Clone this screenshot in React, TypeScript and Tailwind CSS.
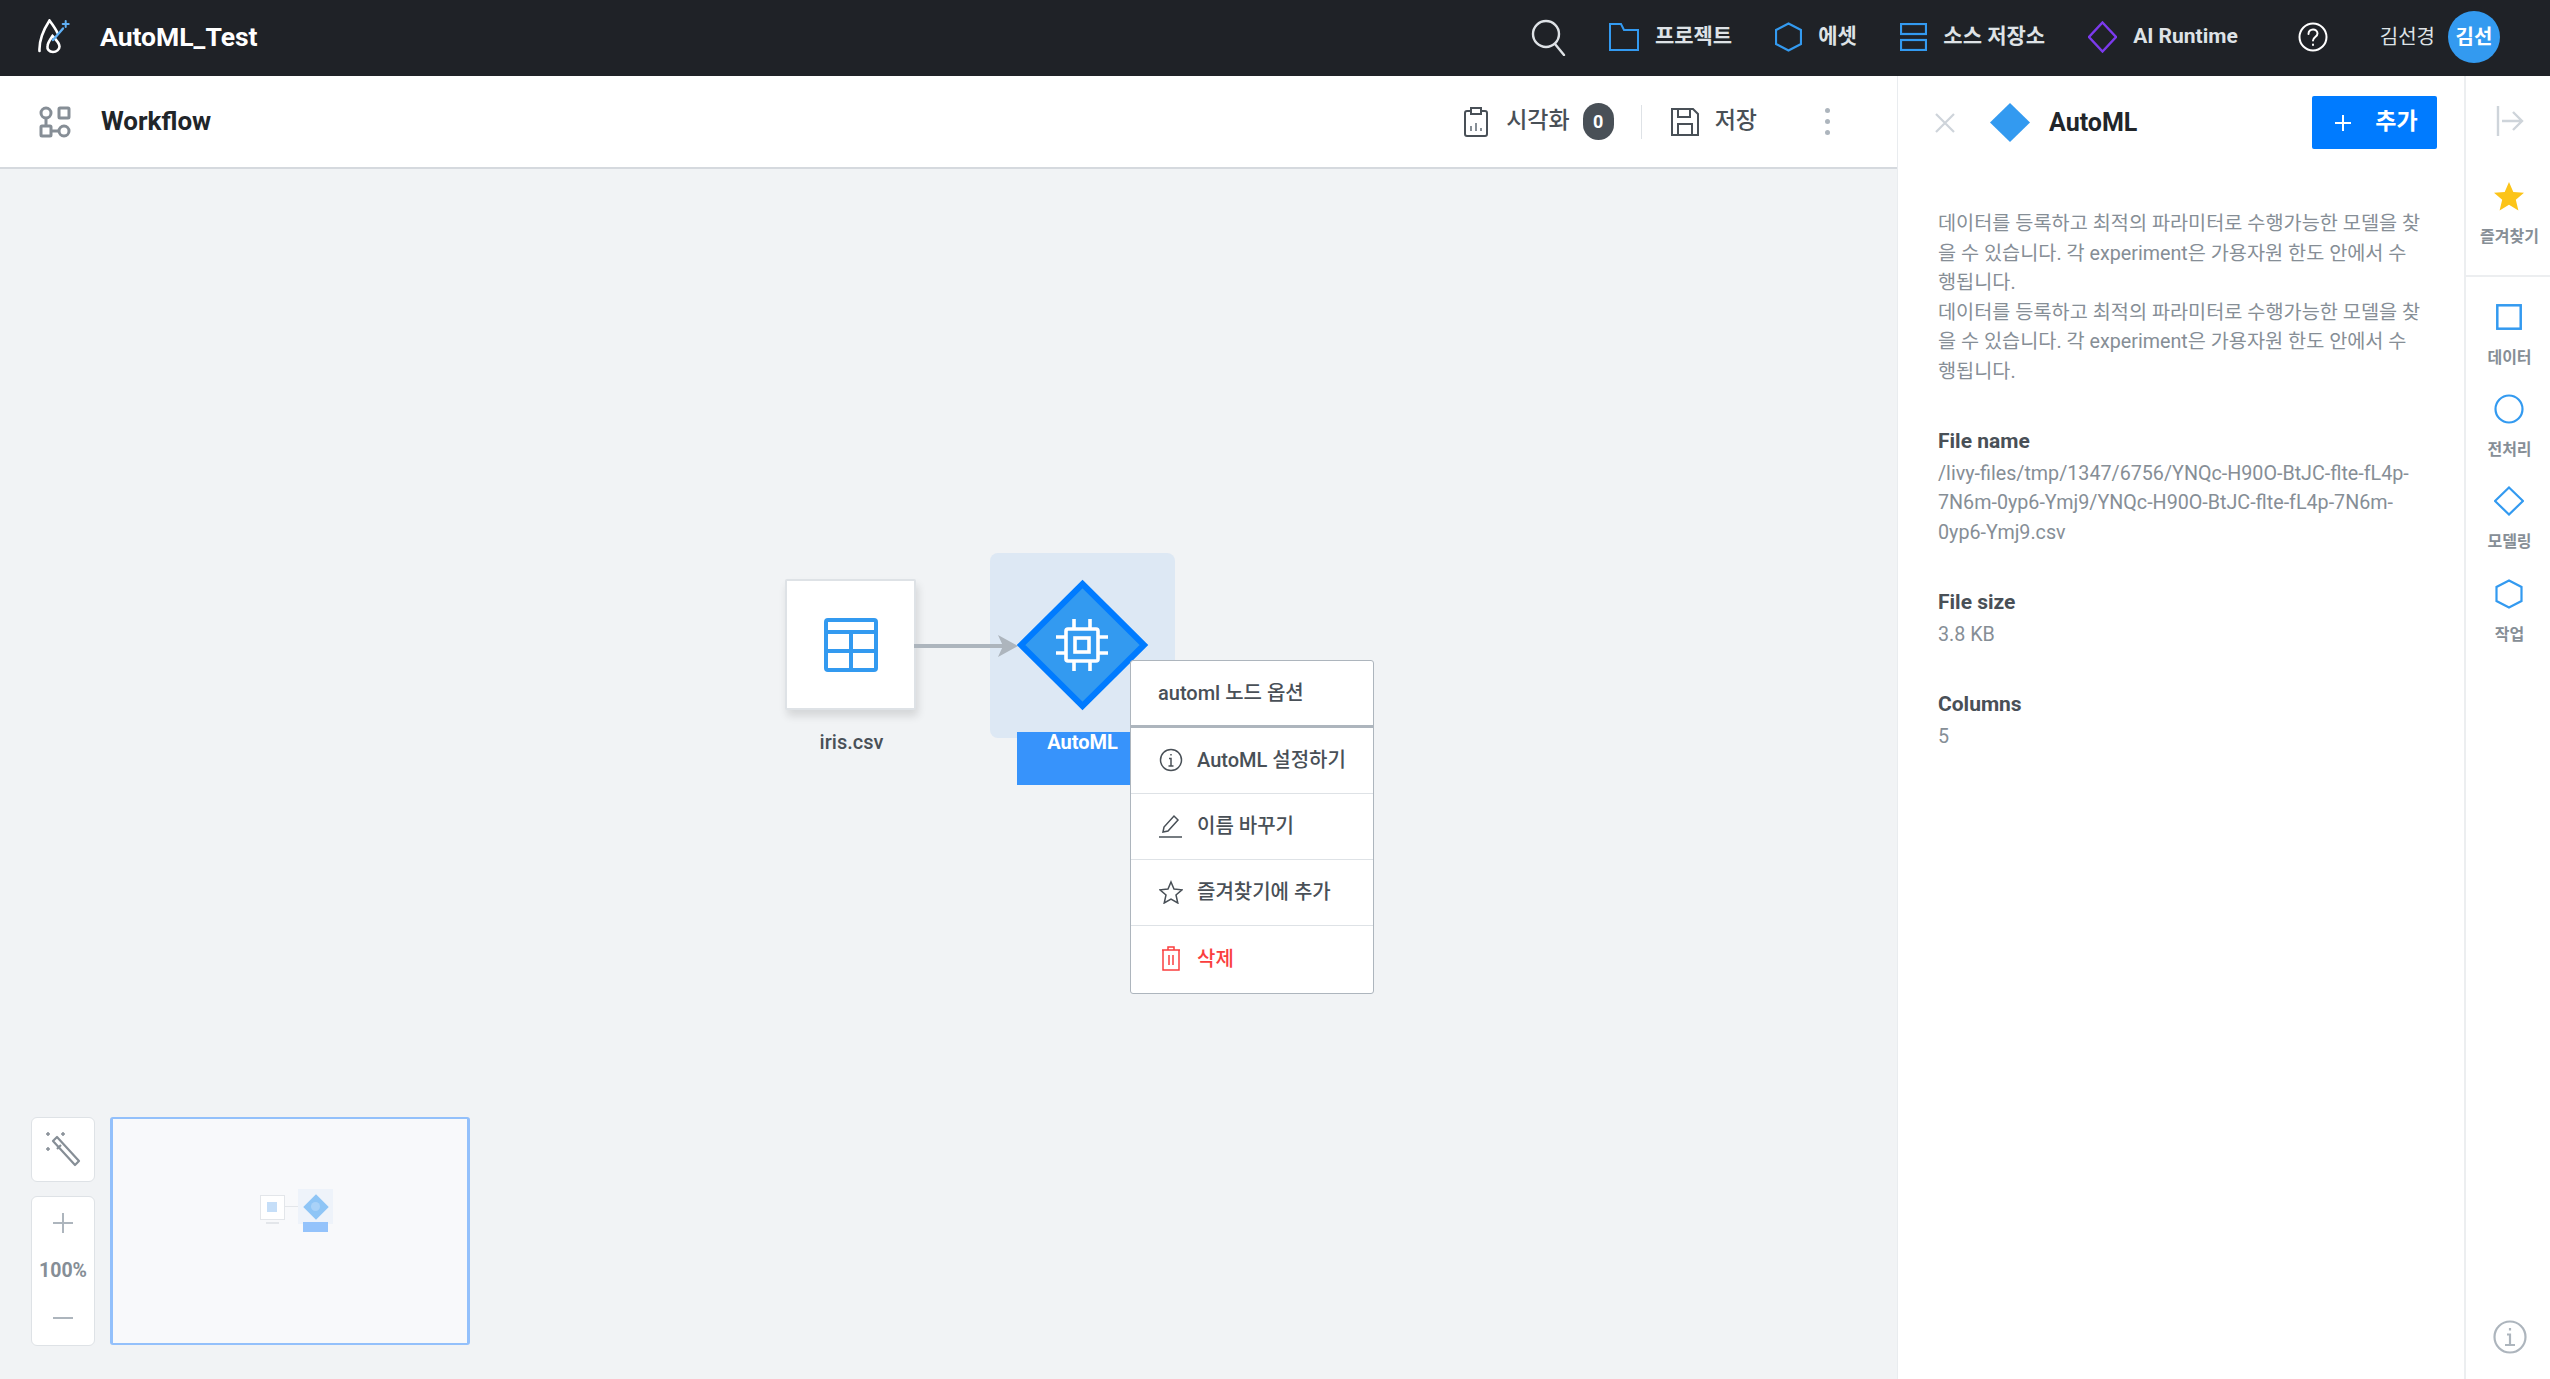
const FONT = "font-['Roboto','Noto_Sans_CJK_KR',sans-serif]";

function Logo() {
  return (
    <svg width="34" height="36" viewBox="0 0 34 36" fill="none" strokeLinecap="round" className="shrink-0">
      <path d="M1.500 32C1 22 6 10 11.500 1.500c3 4 6 8 8 12.500" stroke="#fff" strokeWidth="2.600" />
      <path d="M15 33c-4 0-6-3-5.500-6 .5-4 3-7 5-10 3 3 7 7 7 10.500 0 3-3 5.500-6.500 5.500z" stroke="#fff" strokeWidth="2.600" />
      <path d="M15 21 25 9.500" stroke="#5fb0f5" strokeWidth="2.400" />
      <path d="M27.700 2v6M24.700 5h6" stroke="#5fb0f5" strokeWidth="2" />
    </svg>
  );
}

function WorkflowIcon() {
  return (
    <svg width="32" height="32" viewBox="0 0 32 32" fill="none" stroke="#868e96" strokeWidth="3" className="shrink-0">
      <circle cx="7" cy="7" r="5" />
      <rect x="20" y="2" width="10" height="10" rx="1" />
      <rect x="2" y="20" width="10" height="10" rx="1" />
      <circle cx="25" cy="25" r="5" />
      <path d="M12 25h8M7 12v8" />
    </svg>
  );
}

function NavItem({ icon, label, className }: { icon: React.ReactNode; label: string; className: string }) {
  return (
    <div className={`flex items-center gap-[16px] ${className}`}>
      {icon}
      <span className="text-[21px] font-bold text-[#dee2e6]">{label}</span>
    </div>
  );
}

function ChipIcon() {
  return (
    <svg width="54" height="54" viewBox="0 0 54 54" fill="none" stroke="#fff" strokeWidth="3.600">
      <rect x="11" y="11" width="32" height="32" rx="2" />
      <rect x="20" y="20" width="14" height="14" />
      <path d="M19 1v10M35 1v10M19 43v10M35 43v10M1 19h10M1 35h10M43 19h10M43 35h10" />
    </svg>
  );
}

function TableIcon() {
  return (
    <svg width="54" height="54" viewBox="0 0 54 54" fill="none" stroke="#339af0" strokeWidth="4">
      <rect x="2" y="2" width="50" height="50" rx="2" />
      <path d="M2 14h50M2 33h50M27 14v38" />
    </svg>
  );
}

function MenuRow({ icon, label, danger, last }: { icon: React.ReactNode; label: string; danger?: boolean; last?: boolean }) {
  return (
    <div className={`flex items-center gap-[14px] pb-[2px] pl-[28px] ${last ? "h-[67px]" : "h-[66px] border-b border-[#dee2e6]"}`}>
      <span className="flex w-[24px] justify-center">{icon}</span>
      <span className={`text-[20px] font-medium ${danger ? "text-[#fa3e3e]" : "text-[#495057]"}`}>{label}</span>
    </div>
  );
}

function RailItem({ icon, label, className }: { icon: React.ReactNode; label: string; className: string }) {
  return (
    <div className={`flex flex-col items-center ${className}`}>
      <span className="flex h-[30px] items-center">{icon}</span>
      <span className="mt-[16px] text-[16px] leading-[20px] font-bold text-[#868e96]">{label}</span>
    </div>
  );
}

export default function App() {
  return (
    <div className={`flex h-screen w-full flex-col overflow-hidden bg-white ${FONT}`}>
      <header className="flex h-[76px] shrink-0 items-center bg-[#1f2227] pb-[3px] pl-[38px] pr-[50px]">
        <Logo />
        <h1 className="ml-[28px] text-[26.500px] font-bold text-white">AutoML_Test</h1>
        <div className="ml-auto flex items-center">
          <svg width="36" height="38" viewBox="0 0 36 38" fill="none" stroke="#dee2e6" strokeWidth="2.400" strokeLinecap="round">
            <circle cx="15" cy="16" r="13" />
            <path d="M24 26l9 11" />
          </svg>
          <NavItem
            className="ml-[42px]"
            label="프로젝트"
            icon={
              <svg width="30" height="28" viewBox="0 0 30 28" fill="none" stroke="#339af0" strokeWidth="2">
                <path d="M1 1h11l3 6h14v20H1z" />
              </svg>
            }
          />
          <NavItem
            className="ml-[43px]"
            label="에셋"
            icon={
              <svg width="27" height="30" viewBox="0 0 27 30" fill="none" stroke="#339af0" strokeWidth="2.200">
                <path d="M13.500 1.500 26 8v14l-12.500 6.500L1 22V8z" />
              </svg>
            }
          />
          <NavItem
            className="ml-[43.500px]"
            label="소스 저장소"
            icon={
              <svg width="27" height="28" viewBox="0 0 27 28" fill="none" stroke="#339af0" strokeWidth="2.200">
                <rect x="1" y="1" width="25" height="10" />
                <rect x="1" y="17" width="25" height="10" />
              </svg>
            }
          />
          <NavItem
            className="ml-[43px]"
            label="AI Runtime"
            icon={
              <svg width="29" height="32" viewBox="0 0 29 32" fill="none" stroke="#7c3aed" strokeWidth="2.400">
                <path d="M14.500 1.500 28 16 14.500 30.500 1 16z" />
              </svg>
            }
          />
          <svg className="ml-[60px]" width="30" height="30" viewBox="0 0 30 30" fill="none" stroke="#fff" strokeWidth="2" strokeLinecap="round">
            <circle cx="15" cy="15" r="13.500" />
            <path d="M10.500 12c0-6 9-6 9-.5 0 3.500-4.500 3.500-4.500 7" />
            <path d="M15 22.500v.5" />
          </svg>
          <span className="ml-[52px] text-[20px] text-[#dee2e6]">김선경</span>
          <div className="ml-[13px] flex h-[52px] w-[52px] items-center justify-center rounded-full bg-[#339af0] text-[20px] font-bold text-white">
            김선
          </div>
        </div>
      </header>

      <div className="flex min-h-0 flex-1">
        <main className="flex min-w-0 flex-1 flex-col">
          <div className="flex h-[93px] shrink-0 items-center border-b-2 border-[#d5d9de] pl-[39px] pr-[67px]">
            <WorkflowIcon />
            <h2 className="ml-[30px] text-[26px] font-bold text-[#212529]">Workflow</h2>
            <div className="ml-auto flex items-center">
              <svg width="24" height="30" viewBox="0 0 24 30" fill="none" stroke="#495057" strokeWidth="2">
                <rect x="1" y="4" width="22" height="25" rx="2" />
                <rect x="7" y="1" width="10" height="6" fill="#fff" />
                <path d="M7 24v-5M12 24v-8M17 24v-3" stroke="#868e96" />
              </svg>
              <span className="ml-[18px] text-[23px] font-medium text-[#495057]">시각화</span>
              <span className="ml-[13px] flex h-[37px] w-[31px] items-center justify-center rounded-full bg-[#495057] text-[18px] font-bold text-white">
                0
              </span>
              <div className="ml-[27px] h-[34px] w-px bg-[#dee2e6]" />
              <svg className="ml-[29px]" width="28" height="28" viewBox="0 0 28 28" fill="none" stroke="#495057" strokeWidth="2">
                <path d="M1 1h21l5 5v21H1z" />
                <path d="M7 1v8h12V1M7 27V16h14v11" />
              </svg>
              <span className="ml-[16px] text-[23px] font-medium text-[#495057]">저장</span>
              <div className="ml-[68px] flex flex-col gap-[6px]">
                <span className="h-[5px] w-[5px] rounded-full bg-[#adb5bd]" />
                <span className="h-[5px] w-[5px] rounded-full bg-[#adb5bd]" />
                <span className="h-[5px] w-[5px] rounded-full bg-[#adb5bd]" />
              </div>
            </div>
          </div>

          <div className="relative flex-1 bg-[#f1f3f5]">
            {/* nodes, positions are canvas coordinates */}
            <div className="absolute left-[785px] top-[410px] flex h-[131px] w-[131px] items-center justify-center rounded-[2px] border-2 border-[#dee2e6] bg-white shadow-[2px_6px_8px_rgba(0,0,0,0.12)]">
              <TableIcon />
            </div>
            <div className="absolute left-[786px] top-[562px] w-[131px] text-center text-[20px] leading-[22px] font-medium text-[#495057]">
              iris.csv
            </div>
            <div className="absolute left-[990px] top-[384px] h-[185px] w-[185px] rounded-[8px] bg-[#dde8f4]" />
            <div className="absolute left-[1017px] top-[563px] h-[53px] w-[131px] bg-[#3793fb] text-center text-[20px] leading-[20px] font-bold text-white">
              AutoML
            </div>
            <svg className="absolute left-[914px] top-[466px]" width="104" height="22" viewBox="0 0 104 22" fill="none">
              <path d="M0 11h90" stroke="#adb5bd" strokeWidth="4" />
              <path d="M84 0l20 11-20 11 5-11z" fill="#adb5bd" />
            </svg>
            <svg className="absolute left-[1016px] top-[410px]" width="133" height="132" viewBox="0 0 133 132">
              <path d="M66.500 5 128 66 66.500 127 5 66z" fill="#339af0" stroke="#007bff" strokeWidth="6" />
            </svg>
            <div className="absolute left-[1055px] top-[449px]">
              <ChipIcon />
            </div>

            {/* node context menu */}
            <div className="absolute left-[1130px] top-[491px] w-[244px] overflow-hidden rounded-[3px] border border-[#adb5bd] bg-white">
              <div className="flex h-[67px] items-center border-b-[3px] border-[#adb5bd] pl-[27px] text-[20px] font-medium text-[#495057]">
                automl 노드 옵션
              </div>
              <MenuRow
                label="AutoML 설정하기"
                icon={
                  <svg width="24" height="24" viewBox="0 0 24 24" fill="none" stroke="#495057" strokeWidth="1.500">
                    <circle cx="12" cy="12" r="10.500" />
                    <path d="M12 6v1.500M10 10.500h2V18M9.500 18h5" />
                  </svg>
                }
              />
              <MenuRow
                label="이름 바꾸기"
                icon={
                  <svg width="24" height="24" viewBox="0 0 24 24" fill="none" stroke="#495057" strokeWidth="1.500">
                    <path d="M4 18l1-5L15 2l4 4L9 17z" />
                    <path d="M0 23h23" />
                  </svg>
                }
              />
              <MenuRow
                label="즐겨찾기에 추가"
                icon={
                  <svg width="24" height="24" viewBox="0 0 24 24" fill="none" stroke="#495057" strokeWidth="1.500">
                    <path d="M12 2l3 7 8 .8-6 5.200 1.800 8L12 19l-6.800 4L7 15 1 9.800 9 9z" />
                  </svg>
                }
              />
              <MenuRow
                danger
                last
                label="삭제"
                icon={
                  <svg width="20" height="25" viewBox="0 0 20 25" fill="none" stroke="#fa3e3e" strokeWidth="1.500">
                    <path d="M1 4h18M7 4V1h6v3M2 4v20h16V4M8 9v10M12 9v10" />
                  </svg>
                }
              />
            </div>

            {/* zoom controls and minimap */}
            <div className="absolute bottom-[33px] left-[31px] flex gap-[15px]">
              <div className="flex flex-col gap-[14px]">
                <div className="flex h-[65px] w-[64px] items-center justify-center rounded-[6px] border border-[#dee2e6] bg-white">
                  <svg width="38" height="38" viewBox="0 0 38 38" fill="none" stroke="#868e96" strokeWidth="2.200">
                    <path d="M13 6l22 24-4 4L9 10z" strokeLinejoin="round" />
                    <path d="M17 14l-4 4" />
                    <path d="M4 1v4M2 3h4M19 1v4M17 3h4M4 16v4M2 18h4" strokeWidth="1.500" />
                  </svg>
                </div>
                <div className="flex h-[150px] w-[64px] flex-col items-center justify-between rounded-[6px] border border-[#dee2e6] bg-white pb-[17px] pt-[16px]">
                  <svg width="20" height="20" viewBox="0 0 20 20" stroke="#adb5bd" strokeWidth="2">
                    <path d="M10 0v20M0 10h20" />
                  </svg>
                  <span className="text-[19.500px] font-bold text-[#868e96]">100%</span>
                  <svg width="20" height="20" viewBox="0 0 20 20" stroke="#adb5bd" strokeWidth="2">
                    <path d="M0 10h20" />
                  </svg>
                </div>
              </div>
              <div className="relative h-[228px] w-[360px] rounded-[3px] border-x-[3px] border-y-2 border-[#93c0fb] bg-[#f8f9fb]">
                <div className="absolute left-[147px] top-[76px] h-[25px] w-[25px] border border-[#e3e6ea] bg-white" />
                <div className="absolute left-[154px] top-[83px] h-[10px] w-[10px] bg-[#c5def8]" />
                <div className="absolute left-[153px] top-[103px] h-[2px] w-[13px] bg-[#e3e6ea]" />
                <div className="absolute left-[172px] top-[87px] h-px w-[14px] bg-[#e3e6ea]" />
                <div className="absolute left-[185px] top-[70px] h-[35px] w-[35px] bg-[#eef3fa]" />
                <div className="absolute left-[193.500px] top-[78.500px] h-[18px] w-[18px] rotate-45 bg-[#8ec5f6]" />
                <div className="absolute left-[198px] top-[83px] h-[9px] w-[9px] rounded-full bg-[#a9d2f8]" />
                <div className="absolute left-[190px] top-[103px] h-[10px] w-[25px] bg-[#94c3fb]" />
              </div>
            </div>
          </div>
        </main>

        <aside className="flex w-[567px] shrink-0 flex-col border-l border-[#e9ecef] bg-white">
          <div className="flex items-center pl-[37px] pr-[27px] pt-[20px]">
            <svg width="20" height="20" viewBox="0 0 20 20" stroke="#ced4da" strokeWidth="2.200">
              <path d="M1 1l18 18M19 1 1 19" />
            </svg>
            <svg className="ml-[35px]" width="40" height="39" viewBox="0 0 40 39">
              <path d="M20 0l20 19.500L20 39 0 19.500z" fill="#339af0" />
            </svg>
            <span className="ml-[19px] text-[25px] font-bold text-[#212529]">AutoML</span>
            <button className="ml-auto flex h-[53px] w-[125px] items-center justify-center gap-[24px] rounded-[2px] bg-[#007bff] pl-[4px] text-[23px] font-bold text-white">
              <svg width="16" height="16" viewBox="0 0 16 16" stroke="#fff" strokeWidth="2">
                <path d="M8 0v16M0 8h16" />
              </svg>
              추가
            </button>
          </div>
          <div className="flex flex-col pl-[40px] pr-[41px] pt-[60px] text-[19.700px] leading-[29.500px] text-[#868e96]">
            <p className="break-all">
              데이터를 등록하고 최적의 파라미터로 수행가능한 모델을 찾을 수 있습니다. 각 experiment은 가용자원 한도 안에서 수행됩니다.
              <br />
              데이터를 등록하고 최적의 파라미터로 수행가능한 모델을 찾을 수 있습니다. 각 experiment은 가용자원 한도 안에서 수행됩니다.
            </p>
            <h3 className="mb-[2px] mt-[41px] text-[21px] font-bold text-[#495057]">File name</h3>
            <p className="break-words">/livy-files/tmp/1347/6756/YNQc-H90O-BtJC-flte-fL4p-7N6m-0yp6-Ymj9/YNQc-H90O-BtJC-flte-fL4p-7N6m-0yp6-Ymj9.csv</p>
            <h3 className="mb-[2px] mt-[41px] text-[21px] font-bold text-[#495057]">File size</h3>
            <p>3.8 KB</p>
            <h3 className="mb-[2px] mt-[41px] text-[21px] font-bold text-[#495057]">Columns</h3>
            <p>5</p>
          </div>
        </aside>

        <nav className="flex w-[86px] shrink-0 flex-col items-center border-l-2 border-[#eceef0] bg-white pl-[3px]">
          <div className="-ml-[3px] flex w-[calc(100%+3px)] flex-col items-center border-b-2 border-[#eceef0] pb-[28px] pl-[3px] pt-[29px]">
            <svg width="28" height="32" viewBox="0 0 28 32" fill="none" stroke="#ced4da" strokeWidth="2.400">
              <path d="M2 1v30M6 16h20M17 7l9 9-9 9" />
            </svg>
            <RailItem
              className="mt-[44px]"
              label="즐겨찾기"
              icon={
                <svg width="30" height="30" viewBox="0 0 30 30" fill="#fcc419">
                  <path d="M15 1l4.300 10 10.700.800-8.200 7 2.600 10.700L15 23.700 5.600 29.500l2.600-10.700L0 11.800 10.700 11z" />
                </svg>
              }
            />
          </div>
          <RailItem
            className="mt-[25px]"
            label="데이터"
            icon={
              <svg width="26" height="26" viewBox="0 0 26 26" fill="none" stroke="#339af0" strokeWidth="2.500">
                <rect x="1.300" y="1.300" width="23.400" height="23.400" />
              </svg>
            }
          />
          <RailItem
            className="mt-[26px]"
            label="전처리"
            icon={
              <svg width="30" height="30" viewBox="0 0 30 30" fill="none" stroke="#339af0" strokeWidth="2.200">
                <circle cx="15" cy="15" r="13.500" />
              </svg>
            }
          />
          <RailItem
            className="mt-[26px]"
            label="모델링"
            icon={
              <svg width="30" height="30" viewBox="0 0 30 30" fill="none" stroke="#339af0" strokeWidth="2.200">
                <path d="M15 1.500 29 15 15 28.500 1 15z" />
              </svg>
            }
          />
          <RailItem
            className="mt-[27px]"
            label="작업"
            icon={
              <svg width="28" height="30" viewBox="0 0 28 30" fill="none" stroke="#339af0" strokeWidth="2.200">
                <path d="M14 1.500 26.500 8v14L14 28.500 1.500 22V8z" />
              </svg>
            }
          />
          <svg className="mb-[25px] mt-auto" width="34" height="34" viewBox="0 0 34 34" fill="none" stroke="#adb5bd" strokeWidth="2.200">
            <circle cx="17" cy="17" r="15.500" />
            <path d="M17 8v2.500M14 14.500h3V25M12 25h10" />
          </svg>
        </nav>
      </div>
    </div>
  );
}
